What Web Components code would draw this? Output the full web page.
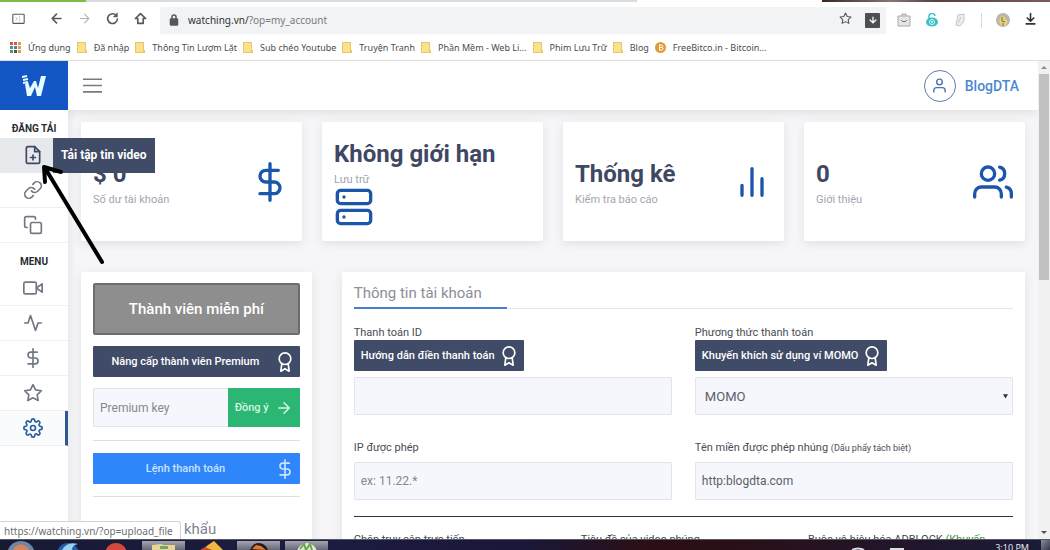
<!DOCTYPE html>
<html lang="vi">
<head>
<meta charset="utf-8">
<meta name="viewport" content="width=device-width, initial-scale=1">
<title>watching.vn - Tài khoản</title>
<style>
  html, body { margin: 0; height: 100%; }
  body { font-family: Roboto, "Noto Sans", sans-serif; font-size: 11px; color: #3e4555; background: #fff; overflow: hidden; }
</style>
</head>
<body>
<browser-window>
  <tab-strip slot="chrome"></tab-strip>
  <browser-toolbar slot="chrome" address="watching.vn/" query="?op=my_account"></browser-toolbar>
  <bookmarks-bar slot="chrome">
    <bookmark-link kind="apps">Ứng dụng</bookmark-link>
    <bookmark-link>Đã nhập</bookmark-link>
    <bookmark-link>Thông Tin Lượm Lặt</bookmark-link>
    <bookmark-link>Sub chéo Youtube</bookmark-link>
    <bookmark-link>Truyện Tranh</bookmark-link>
    <bookmark-link>Phần Mềm - Web Li...</bookmark-link>
    <bookmark-link>Phim Lưu Trữ</bookmark-link>
    <bookmark-link>Blog</bookmark-link>
    <bookmark-link kind="coin">FreeBitco.in - Bitcoin...</bookmark-link>
  </bookmarks-bar>

  <app-shell>
    <app-header slot="header" user="BlogDTA"></app-header>
    <side-nav slot="nav">
      <nav-heading>Đăng tải</nav-heading>
      <nav-item icon="file-plus" hovered tip="Tải tập tin video"></nav-item>
      <nav-item icon="link" label="Tải từ liên kết"></nav-item>
      <nav-item icon="copy" label="Sao chép"></nav-item>
      <nav-heading>Menu</nav-heading>
      <nav-item icon="video" label="Video"></nav-item>
      <nav-item icon="activity" label="Thống kê"></nav-item>
      <nav-item icon="dollar" label="Thanh toán"></nav-item>
      <nav-item icon="star" label="Premium"></nav-item>
      <nav-item icon="settings" label="Cài đặt" current></nav-item>
    </side-nav>
    <stat-row>
      <stat-card value="$ 0" label="Số dư tài khoản" icon="dollar"></stat-card>
      <stat-card value="Không giới hạn" label="Lưu trữ" icon="server" stacked></stat-card>
      <stat-card value="Thống kê" label="Kiểm tra báo cáo" icon="bars"></stat-card>
      <stat-card value="0" label="Giới thiệu" icon="users"></stat-card>
    </stat-row>
    <panel-row>
      <member-panel></member-panel>
      <account-panel heading="Thông tin tài khoản">
        <form-field label="Thanh toán ID">
          <action-button slot="action" icon="award">Hướng dẫn điền thanh toán</action-button>
        </form-field>
        <form-field label="Phương thức thanh toán" options="MOMO">
          <action-button slot="action" icon="award">Khuyến khích sử dụng ví MOMO</action-button>
        </form-field>
        <form-field label="IP được phép" placeholder="ex: 11.22.*"></form-field>
        <form-field label="Tên miền được phép nhúng" note="(Dấu phẩy tách biệt)" value="http:blogdta.com"></form-field>
        <span slot="more">Chặn truy cập trực tiếp</span>
        <span slot="more">Tiêu đề của video nhúng</span>
        <span slot="more">Buộc vô hiệu hóa ADBLOCK <span style="color:#3f8f45">(Khuyến</span></span>
      </account-panel>
    </panel-row>
  </app-shell>

  <pointer-arrow slot="overlay"></pointer-arrow>
  <status-bubble slot="overlay">https://watching.vn/?op=upload_file</status-bubble>
  <task-bar slot="taskbar" time="3:10 PM"></task-bar>
</browser-window>

<script>
const ICONS = {
  'file-plus': '<path d="M14 2H6a2 2 0 0 0-2 2v16a2 2 0 0 0 2 2h12a2 2 0 0 0 2-2V8z"/><path d="M14 2v6h6M12 18v-6M9 15h6"/>',
  link: '<path d="M10 13a5 5 0 0 0 7.54.54l3-3a5 5 0 0 0-7.07-7.07l-1.72 1.71"/><path d="M14 11a5 5 0 0 0-7.54-.54l-3 3a5 5 0 0 0 7.07 7.07l1.71-1.71"/>',
  copy: '<rect x="9" y="9" width="13" height="13" rx="2"/><path d="M5 15H4a2 2 0 0 1-2-2V4a2 2 0 0 1 2-2h9a2 2 0 0 1 2 2v1"/>',
  video: '<path d="M23 7l-7 5 7 5V7z"/><rect x="1" y="5" width="15" height="14" rx="2"/>',
  activity: '<path d="M22 12h-4l-3 9L9 3l-3 9H2"/>',
  dollar: '<path d="M12 1v22M17 5H9.500a3.500 3.500 0 0 0 0 7h5a3.500 3.500 0 0 1 0 7H6"/>',
  star: '<path d="M12 2l3.090 6.260L22 9.270l-5 4.870 1.180 6.880L12 17.770l-6.180 3.250L7 14.140 2 9.270l6.910-1.010z"/>',
  settings: '<circle cx="12" cy="12" r="3"/><path d="M19.400 15a1.650 1.650 0 0 0 .33 1.820l.06.06a2 2 0 0 1-2.830 2.830l-.06-.06a1.650 1.650 0 0 0-1.820-.33 1.650 1.650 0 0 0-1 1.510V21a2 2 0 0 1-4 0v-.09A1.650 1.650 0 0 0 9 19.400a1.650 1.650 0 0 0-1.820.33l-.06.06a2 2 0 0 1-2.830-2.830l.06-.06a1.650 1.650 0 0 0 .33-1.820 1.650 1.650 0 0 0-1.510-1H3a2 2 0 0 1 0-4h.09A1.650 1.650 0 0 0 4.600 9a1.650 1.650 0 0 0-.33-1.820l-.06-.06a2 2 0 0 1 2.830-2.830l.06.06a1.650 1.650 0 0 0 1.820.33H9a1.650 1.650 0 0 0 1-1.510V3a2 2 0 0 1 4 0v.09a1.650 1.650 0 0 0 1 1.510 1.650 1.650 0 0 0 1.820-.33l.06-.06a2 2 0 0 1 2.830 2.830l-.06.06a1.650 1.650 0 0 0-.33 1.820V9a1.650 1.650 0 0 0 1.510 1H21a2 2 0 0 1 0 4h-.09a1.650 1.650 0 0 0-1.510 1z"/>',
  server: '<rect x="2" y="2" width="20" height="8" rx="2"/><rect x="2" y="14" width="20" height="8" rx="2"/><path d="M6 6h.01M6 18h.01"/>',
  bars: '<path d="M18 20V10M12 20V4M6 20v-6"/>',
  users: '<path d="M17 21v-2a4 4 0 0 0-4-4H5a4 4 0 0 0-4 4v2"/><circle cx="9" cy="7" r="4"/><path d="M23 21v-2a4 4 0 0 0-3-3.870M16 3.130a4 4 0 0 1 0 7.750"/>',
  user: '<path d="M20 21v-2a4 4 0 0 0-4-4H8a4 4 0 0 0-4 4v2"/><circle cx="12" cy="7" r="4"/>',
  award: '<circle cx="12" cy="8" r="7"/><path d="M8.210 13.890L7 23l5-3 5 3-1.210-9.120"/>',
  right: '<path d="M5 12h14M12 5l7 7-7 7"/>',
  back: '<path d="M20 12H5M12 4l-8 8 8 8"/>',
  forward: '<path d="M4 12h15M12 4l8 8-8 8"/>',
  reload: '<path d="M19 6.500A9 9 0 1 0 21 13"/><path d="M21 2v7h-7z" fill="currentColor" stroke-width="1"/>',
  home: '<path d="M12 3L2.500 12H7v9h10v-9h4.500z"/>',
  panel: '<rect x="1.500" y="4" width="21" height="17" rx="1"/><path d="M7 10l3 2.500L7 15M14 8v1M14 12v1M14 16v1" stroke-width="1.200" opacity=".6"/>',
  lock: '<rect x="5" y="10" width="14" height="12" rx="1" fill="currentColor"/><path d="M8 10V6a4 4 0 0 1 8 0v4"/>',
  save: '<path d="M12 3v13M6 11l6 6 6-6M4 22h16"/>',
  menu: '<path d="M0 4h24M0 12h24M0 20h24"/>'
};

function define(name, template, setup) {
  customElements.define(name, class extends HTMLElement {
    connectedCallback() {
      if (this.shadowRoot) return;
      const root = this.attachShadow({ mode: 'open' });
      root.innerHTML = typeof template === 'function' ? template(this) : template;
      if (setup) setup(this, root);
    }
  });
}
const attr = (el, name) => el.getAttribute(name) || '';

define('ui-icon', el => `
  <style>
    :host { display: inline-block; flex: none; width: var(--icon-size, 20px); height: var(--icon-size, 20px); }
    svg { display: block; width: 100%; height: 100%; fill: none; stroke: currentColor; stroke-width: var(--icon-stroke, 2); stroke-linecap: round; stroke-linejoin: round; }
  </style>
  <svg viewBox="0 0 24 24" aria-hidden="true">${ICONS[attr(el, 'name')]}</svg>`);

define('browser-window', `
  <style>
    :host { display: flex; flex-direction: column; height: 100vh; position: relative; overflow: hidden; }
    .page { flex: 1; min-height: 0; display: flex; }
    .content { flex: 1; min-width: 0; overflow: hidden; }
    .scroll { width: 12px; flex: none; background: #f1f1f1; display: flex; flex-direction: column; align-items: center; }
    .scroll svg { width: 12px; height: 13px; flex: none; }
    .thumb { width: 10px; height: 43%; background: #c1c1c1; }
    .track { flex: 1; }
  </style>
  <slot name="chrome"></slot>
  <div class="page">
    <div class="content"><slot></slot></div>
    <div class="scroll">
      <svg viewBox="0 0 12 13"><path d="M3 8l3-3 3 3z" fill="#8b8b8b"/></svg>
      <div class="thumb"></div><div class="track"></div>
      <svg viewBox="0 0 12 13"><path d="M3 5l3 3 3-3z" fill="#505050"/></svg>
    </div>
  </div>
  <slot name="taskbar"></slot>
  <slot name="overlay"></slot>`);

define('tab-strip', `
  <style>
    :host { display: flex; height: 2px; flex: none; background: #fff; }
    i { display: block; height: 100%; }
    .done { flex: 86; background: #7fbb4a; }
    .tabs { flex: 551; background: #d9dbdd; }
    .active { flex: 185; background: #fff; }
    .wall { flex: 228; background: linear-gradient(90deg, #3a2727, #8a7474 30%, #5a4040 50%, #7a5c5c); }
  </style>
  <i class="done"></i><i class="tabs"></i><i class="active"></i><i class="wall"></i>`);

define('browser-toolbar', el => `
  <style>
    :host { display: flex; align-items: center; height: 36px; flex: none; padding: 0 13px 0 12px; color: #55585c; font-family: "Noto Sans", sans-serif; --icon-size: 13px; --icon-stroke: 3; }
    button { display: block; padding: 0; border: 0; background: none; color: inherit; }
    nav { display: flex; align-items: center; gap: 15px; }
    nav button:first-child { margin-right: 10px; }
    .off { color: #b4b6b8; }
    .address { flex: 1; display: flex; align-items: center; height: 27px; margin: 0 11px 0 13px; padding: 0 6px 0 8px; gap: 8px; background: #f1f3f4; border-radius: 2px; --icon-size: 12px; }
    .address > .url { flex: 1; font-size: 10px; color: #77797c; }
    .url b { font-weight: 400; color: #303236; }
    .stars { --icon-size: 13px; --icon-stroke: 2; margin-right: 5px; }
    .grab { display: grid; place-items: center; width: 15px; height: 15px; background: #4d4f52; border-radius: 1px; color: #fff; --icon-size: 10px; }
    .ext { display: flex; align-items: center; gap: 14px; }
    .ext svg { display: block; width: 14px; height: 14px; }
    hr { width: 1px; height: 15px; margin: 0; border: 0; background: #d8d8d8; }
  </style>
  <nav>
    <button aria-label="Bảng"><ui-icon name="panel" style="--icon-stroke:2"></ui-icon></button>
    <button aria-label="Quay lại"><ui-icon name="back"></ui-icon></button>
    <button aria-label="Tiến" class="off"><ui-icon name="forward" style="--icon-stroke:2"></ui-icon></button>
    <button aria-label="Tải lại"><ui-icon name="reload"></ui-icon></button>
    <button aria-label="Trang chủ"><ui-icon name="home"></ui-icon></button>
  </nav>
  <div class="address">
    <ui-icon name="lock"></ui-icon>
    <div class="url"><b>${attr(el, 'address')}</b>${attr(el, 'query')}</div>
    <button class="stars" aria-label="Đánh dấu"><ui-icon name="star"></ui-icon></button>
    <button class="grab" aria-label="Tải"><ui-icon name="right" style="transform:rotate(90deg)"></ui-icon></button>
  </div>
  <div class="ext">
    <svg viewBox="0 0 14 14"><path d="M1 3h12v10H1zM5 3V1h4v2" fill="#e6e6e6" stroke="#a8a8a8"/><path d="M4 7l2 2 1-1 1 1 2-2" fill="none" stroke="#777"/></svg>
    <svg viewBox="0 0 14 14"><path d="M4 6V4a3 3 0 0 1 6-1" fill="none" stroke="#3cc4cc" stroke-width="1.500"/><ellipse cx="7" cy="9" rx="6" ry="4.500" fill="#35c0c8"/><circle cx="7" cy="9" r="2.500" fill="none" stroke="#d9f6f7"/><circle cx="7" cy="9" r="1" fill="#d9f6f7"/></svg>
    <svg viewBox="0 0 14 14"><path d="M5 2l6-1v7l-4 5-4-1 1-5z" fill="#eee" stroke="#c4c4c4"/><path d="M8 4L5 10" stroke="#c4c4c4"/></svg>
    <hr>
    <svg viewBox="0 0 14 14"><circle cx="7" cy="7" r="7" fill="#b9b7ab"/><path d="M5 3l4 1 1 3 2 1-2 5H5L3 8z" fill="#e4d27a"/><path d="M6 4v4l3 1M7 10v3" stroke="#77704a" fill="none"/></svg>
    <button aria-label="Tải xuống" style="color:#333"><ui-icon name="save"></ui-icon></button>
  </div>`);

define('bookmarks-bar', `
  <style>
    :host { display: flex; align-items: center; gap: 6px; height: 23px; flex: none; padding: 0 10px 3px; border-bottom: 1px solid #dcdee0; box-sizing: border-box; font-family: "Noto Sans", sans-serif; font-size: 9px; white-space: nowrap; }
  </style>
  <slot></slot>`);

define('bookmark-link', el => {
  const kind = attr(el, 'kind');
  const apps = ['#d9534a', '#d9534a', '#e0a04a', '#4a9e5a', '#4a7fd0', '#e0a04a', '#4a9e5a', '#555', '#e0a04a']
    .map((c, i) => `<rect x="${(i % 3) * 4}" y="${Math.floor(i / 3) * 4}" width="3" height="3" fill="${c}"/>`).join('');
  const art = kind === 'apps' ? `<svg viewBox="0 0 11 11">${apps}</svg>`
    : kind === 'coin' ? '<svg viewBox="0 0 11 11"><circle cx="5.500" cy="5.500" r="5.500" fill="#e39a35"/><path d="M4 3h2.500a1.200 1.200 0 0 1 0 2.500H4.500h2.300a1.200 1.200 0 0 1 0 2.500H4M4.500 3v5" fill="none" stroke="#fff"/></svg>'
    : '<svg class="folder" viewBox="0 0 10 11"><path d="M0 0h9v8h1v3H0z" fill="#e9c765"/><path d="M1 1h7v9H1z" fill="#fbe08d"/></svg>';
  return `
  <style>
    :host { display: block; }
    a { display: flex; align-items: center; gap: 7px; color: #4a4c50; text-decoration: none; line-height: 14px; }
    svg { display: block; width: 11px; height: 11px; }
    .folder { width: 10px; }
  </style>
  <a href="#">${art}<slot></slot></a>`;
});

define('app-shell', `
  <style>
    :host { display: grid; grid-template-columns: 68px minmax(0, 1fr); grid-template-rows: 49px auto; height: 100%; background: #f6f6f8; }
    .head { grid-column: 1 / -1; position: relative; z-index: 1; }
    main { padding: 12px 13px 0; min-width: 0; }
  </style>
  <div class="head"><slot name="header"></slot></div>
  <slot name="nav"></slot>
  <main><slot></slot></main>`);

define('app-header', el => `
  <style>
    :host { display: flex; align-items: center; height: 49px; background: #fff; box-shadow: 0 2px 10px rgba(40, 45, 60, .12); }
    .logo { display: grid; place-items: center; width: 68px; height: 49px; background: #1457c4; }
    .logo svg { width: 24px; height: 22px; }
    .menu { margin-left: 15px; padding: 0; border: 0; background: none; color: #777a80; --icon-size: 19px; --icon-stroke: 2; }
    .menu ui-icon { display: block; }
    .user { display: flex; align-items: center; gap: 9px; margin-left: auto; margin-right: 19px; color: #4a88d2; font-size: 14px; font-weight: 500; text-decoration: none; }
    .face { display: grid; place-items: center; width: 30px; height: 30px; border: 1px solid #5b7fae; border-radius: 50%; color: #4f77ab; --icon-size: 17px; --icon-stroke: 2; }
  </style>
  <a class="logo" href="#" aria-label="Watching">
    <svg viewBox="0 0 24 22"><path d="M3 9L5 21h4l4-9 2 9h4L24 1h-5l-3 12-2-7h-2L8 13 6 7z" fill="#e4fbff"/><path d="M0 2l5-1M1 5l5-1M1 8l5-1" stroke="#e4fbff" stroke-width="2"/></svg>
  </a>
  <button class="menu" aria-label="Trình đơn"><ui-icon name="menu"></ui-icon></button>
  <a class="user" href="#"><span class="face"><ui-icon name="user"></ui-icon></span><span>${attr(el, 'user')}</span></a>`);

define('side-nav', `
  <style>
    :host { display: block; background: #fff; position: relative; z-index: 2; box-shadow: 2px 0 8px rgba(40, 45, 60, .08); }
  </style>
  <nav><slot></slot></nav>`);

define('nav-heading', `
  <style>
    :host { display: block; height: 19px; padding-top: 9px; line-height: 19px; text-align: center; font-size: 10px; font-weight: 700; text-transform: uppercase; color: #2b2d33; }
  </style>
  <slot></slot>`);

define('nav-item', el => `
  <style>
    :host { display: block; position: relative; color: #727784; --icon-size: 20px; --icon-stroke: 2; }
    a { display: flex; align-items: center; justify-content: center; box-sizing: border-box; height: 35px; padding-right: 3px; border-bottom: 1px solid #f0f0f3; color: inherit; }
    :host([hovered]) { color: #3e4862; }
    :host([hovered]) a { background: #e7e8eb; border-color: #e7e8eb; }
    :host([current]) { color: #2c5f9e; }
    :host([current]) a { padding-right: 0; border-right: 3px solid #2f5890; background: #fafbfd; }
    .tip { position: absolute; left: 53px; top: 0; height: 35px; padding: 0 8px; background: #404b67; color: #fff; font-size: 12px; font-weight: 700; line-height: 35px; white-space: nowrap; }
  </style>
  <a href="#" aria-label="${attr(el, 'label') || attr(el, 'tip')}"><ui-icon name="${attr(el, 'icon')}"></ui-icon></a>
  ${attr(el, 'tip') ? `<span class="tip" role="tooltip">${attr(el, 'tip')}</span>` : ''}`);

define('stat-row', `
  <style>:host { display: grid; grid-template-columns: repeat(4, 1fr); gap: 20px; }</style>
  <slot></slot>`);

define('stat-card', el => `
  <style>
    :host { display: flex; align-items: center; justify-content: space-between; padding: 14px 12px; background: #fff; border-radius: 2px; box-shadow: 0 3px 10px rgba(40, 45, 60, .1); color: #3e4862; }
    :host([stacked]) { flex-direction: column; align-items: flex-start; }
    .value { font-size: 24px; font-weight: 700; line-height: 37px; white-space: nowrap; }
    .label { font-size: 11px; line-height: 14px; color: #a2a5b0; }
    ui-icon { --icon-size: 40px; color: #1b56ad; }
  </style>
  <div><div class="value">${attr(el, 'value')}</div><div class="label">${attr(el, 'label')}</div></div>
  <ui-icon name="${attr(el, 'icon')}"></ui-icon>`);

define('panel-row', `
  <style>:host { display: grid; grid-template-columns: minmax(0, 231fr) minmax(0, 684fr); gap: 30px; margin-top: 31px; }</style>
  <slot></slot>`);

define('action-button', el => `
  <style>
    :host { display: block; }
    button { display: flex; align-items: center; gap: 4px; width: 100%; height: 31px; box-sizing: border-box; padding: 0 5px 0 7px; border: 0; border-radius: 1px; background: var(--button-fill, #404b67); color: var(--button-ink, #fff); font: 500 11px/16px Roboto, sans-serif; white-space: nowrap; --icon-size: 20px; --icon-stroke: 2; }
    span { flex: 1; text-align: center; }
  </style>
  <button type="button"><span><slot></slot></span><ui-icon name="${attr(el, 'icon')}"></ui-icon></button>`);

define('member-panel', `
  <style>
    :host { display: block; padding: 11px 12px; height: 400px; background: #fff; box-shadow: 0 3px 10px rgba(40, 45, 60, .1); }
    .plan { box-sizing: border-box; width: 100%; height: 52px; margin: 0 0 11px; border: 2px solid #6d6d6d; border-radius: 2px; background: #8e8e8e; color: #fff; font: 500 15px/24px Roboto, sans-serif; display: block; }
    .key { display: flex; margin: 11px 0 13px; }
    input { flex: 1; min-width: 0; height: 39px; box-sizing: border-box; padding: 0 6px; border: 1px solid #e2e5ea; border-right: 0; border-radius: 2px 0 0 2px; background: #f6f7fc; font: 12px Roboto, sans-serif; color: #555b66; }
    input::placeholder { color: #84888f; opacity: 1; }
    .ok { display: flex; align-items: center; gap: 6px; padding: 0 7px; border: 0; background: #2bb673; color: #d5f5e4; font: 500 11px Roboto, sans-serif; --icon-size: 18px; }
    hr { height: 1px; margin: 0 0 12px; border: 0; background: #dfe0e3; }
    .pay { --button-fill: #2f86fb; --button-ink: #cbe3ff; margin-bottom: 12px; }
    h2 { margin: 20px 0 0; font-size: 15px; font-weight: 400; line-height: 24px; color: #80858f; }
  </style>
  <button class="plan">Thành viên miễn phí</button>
  <action-button icon="award">Nâng cấp thành viên Premium</action-button>
  <form class="key" onsubmit="return false">
    <input aria-label="Premium key" placeholder="Premium key">
    <button class="ok">Đồng ý<ui-icon name="right"></ui-icon></button>
  </form>
  <hr>
  <action-button class="pay" icon="dollar">Lệnh thanh toán</action-button>
  <hr>
  <h2>Thay đổi mật khẩu</h2>`);

define('account-panel', el => `
  <style>
    :host { display: block; padding: 11px 12px; background: #fff; box-shadow: 0 3px 10px rgba(40, 45, 60, .1); }
    header { border-bottom: 1px solid #e4e5e8; margin-bottom: 16px; }
    h2 { display: inline-block; box-sizing: border-box; min-width: 153px; margin: 0 0 -1px; padding: 0 22px 4px 0; border-bottom: 2px solid #4680cc; font-size: 15px; font-weight: 400; line-height: 20px; color: #8a8f99; vertical-align: top; }
    .fields { display: grid; grid-template-columns: 1fr 1fr; gap: 25px 23px; }
    .more { display: grid; grid-template-columns: repeat(3, minmax(0, 1fr)); column-gap: 22px; margin-top: 16px; padding-top: 15px; border-top: 1px solid #333; font-size: 11px; line-height: 16px; color: #44474d; white-space: nowrap; }
  </style>
  <header><h2>${attr(el, 'heading')}</h2></header>
  <div class="fields"><slot></slot></div>
  <div class="more"><slot name="more"></slot></div>`);

define('form-field', el => {
  const options = attr(el, 'options');
  const note = attr(el, 'note');
  const control = options
    ? `<div class="pick"><select id="control">${options.split(',').map(o => `<option>${o}</option>`).join('')}</select><svg viewBox="0 0 6 6"><path d="M0 1h6L3 6z" fill="#333"/></svg></div>`
    : `<input id="control" value="${attr(el, 'value')}" placeholder="${attr(el, 'placeholder')}">`;
  return `
  <style>
    :host { display: flex; flex-direction: column; align-items: flex-start; min-width: 0; }
    label { font-size: 11px; line-height: 15px; color: #4a4d54; }
    small { font-size: 9px; line-height: 12px; }
    ::slotted(action-button) { margin-bottom: 6px; }
    .plain { margin-bottom: 7px; }
    input, select { display: block; width: 100%; height: 38px; box-sizing: border-box; margin: 0; padding: 0 6px; border: 1px solid #e2e4ec; border-radius: 1px; background: #f6f7fc; font: 12px Roboto, sans-serif; color: #5a5f68; appearance: none; }
    select { padding: 0 9px; font-size: 13px; }
    input::placeholder { color: #84888f; opacity: 1; }
    .pick { display: grid; width: 100%; align-items: center; }
    .pick > * { grid-area: 1 / 1; }
    .pick svg { width: 5px; height: 6px; justify-self: end; margin-right: 5px; pointer-events: none; }
  </style>
  <label for="control" class="${el.children.length ? '' : 'plain'}">${attr(el, 'label')}${note ? ` <small>${note}</small>` : ''}</label>
  <slot name="action"></slot>
  ${control}`;
});

define('status-bubble', `
  <style>
    :host { position: absolute; left: 0; bottom: 11px; height: 18px; padding: 0 7px 0 4px; border: 1px solid #d5d5d5; border-left: 0; border-bottom: 0; border-radius: 0 3px 0 0; background: #fff; color: #6c6e72; font-family: "Noto Sans", sans-serif; font-size: 10px; line-height: 18px; box-sizing: border-box; z-index: 5; }
  </style>
  <slot></slot>`);

define('pointer-arrow', `
  <style>
    :host { position: absolute; left: 38px; top: 160px; width: 70px; height: 108px; pointer-events: none; z-index: 4; }
    svg { display: block; width: 100%; height: 100%; }
  </style>
  <svg viewBox="0 0 70 108" fill="none" stroke="#000" stroke-width="4" stroke-linecap="round" stroke-linejoin="round"><path d="M7 8l57 94M7 22L6 7l17 5"/></svg>`);

define('task-bar', el => `
  <style>
    :host { display: flex; justify-content: space-between; height: 11px; flex: none; overflow: hidden; box-sizing: border-box; border-top: 1px solid #55565e; background: linear-gradient(90deg, #171a33, #1c1c42 30%, #1a1738 50%, #2c0f14 62%, #2a0f18 70%, #1a1c3a); color: #e8e8ee; font-family: "Noto Sans", sans-serif; }
    svg { display: block; width: 330px; height: 10px; flex: none; }
    .tray { display: flex; gap: 12px; align-items: flex-start; }
    .tray svg { width: 190px; }
    time { font-size: 9px; line-height: 16px; white-space: nowrap; }
    .desk { width: 9px; height: 10px; background: linear-gradient(135deg, #8b8d99, #333648); }
  </style>
  <svg viewBox="0 0 330 10">
    <defs><linearGradient id="b" x2="0" y2="1"><stop stop-color="#a5a6b0"/><stop offset="1" stop-color="#5f6070"/></linearGradient></defs>
    <circle cx="21" cy="15" r="14" fill="#6d87a5"/><path d="M13 9q8-9 16 0l-3 3H16z" fill="#d9855a"/>
    <circle cx="68" cy="14" r="11" fill="#1e5fa8"/><path d="M62 10q5-9 16-6-6 1-6 6z" fill="#9ad0f2"/>
    <circle cx="116" cy="14" r="11" fill="#d5483e"/>
    <path d="M142 1h43v10h-43zM237 1h43v10h-43zM285 1h43v10h-43z" fill="url(#b)"/>
    <path d="M152 5l9-1 3 1h11v6h-23z" fill="#e6d693"/><path d="M160 6h8v3h-8z" fill="#6faa65"/>
    <path d="M202 10l6-5 6-4 9 9z" fill="#f0b63e"/><path d="M200 10l5-3 7 3z" fill="#c94d2b"/>
    <circle cx="259" cy="12" r="9" fill="#2b1613"/><path d="M252 9l4-4 5 1 5 4z" fill="#e07a32"/>
    <circle cx="307" cy="13" r="10" fill="#dfead5"/><path d="M300 9l4-5 2 6 4-6 2 6" fill="none" stroke="#6aa64c" stroke-width="2"/>
  </svg>
  <div class="tray">
    <svg viewBox="0 0 190 10"><path d="M59 10q6-3 12 0M98 10V9h12v1" fill="none" stroke="#dcdce4" stroke-width="2"/></svg>
    <time>${attr(el, 'time')}</time>
    <div class="desk"></div>
  </div>`);
</script>
</body>
</html>
